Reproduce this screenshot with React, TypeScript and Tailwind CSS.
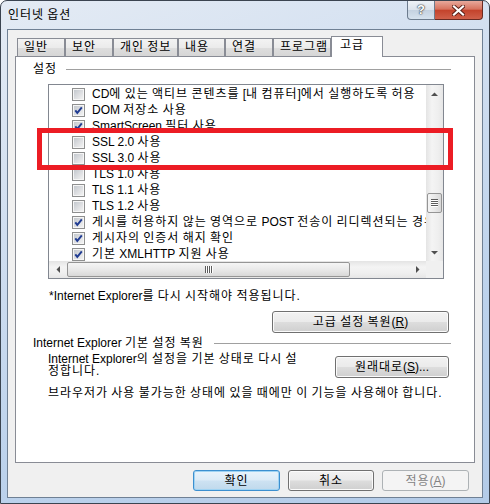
import React from "react";

type Item = { label: string; checked: boolean };

const items: Item[] = [
  { label: "CD에 있는 액티브 콘텐츠를 [내 컴퓨터]에서 실행하도록 허용", checked: false },
  { label: "DOM 저장소 사용", checked: true },
  { label: "SmartScreen 필터 사용", checked: true },
  { label: "SSL 2.0 사용", checked: false },
  { label: "SSL 3.0 사용", checked: false },
  { label: "TLS 1.0 사용", checked: false },
  { label: "TLS 1.1 사용", checked: false },
  { label: "TLS 1.2 사용", checked: false },
  { label: "게시를 허용하지 않는 영역으로 POST 전송이 리디렉션되는 경우 경고", checked: true },
  { label: "게시자의 인증서 해지 확인", checked: true },
  { label: "기본 XMLHTTP 지원 사용", checked: true },
];

const tabs = [
  { label: "일반", w: "w-[48px]" },
  { label: "보안", w: "w-[48px]" },
  { label: "개인 정보", w: "w-[65px]" },
  { label: "내용", w: "w-[47px]" },
  { label: "연결", w: "w-[48px]" },
  { label: "프로그램", w: "w-[58px]" },
];

// Gulim draws hangul on a full 12px cell; Noto's hangul are a bit narrower,
// so hangul runs get a little extra spacing.
const HANGUL = /([\u1100-\u11ff\u3130-\u318f\uac00-\ud7a3]+)/;
const K = ({ t }: { t: string }) => (
  <>
    {t.split(HANGUL).map((part, i) =>
      HANGUL.test(part) ? (
        <span key={i} className="tracking-[0.96px]">
          {part}
        </span>
      ) : (
        <React.Fragment key={i}>{part}</React.Fragment>
      )
    )}
  </>
);

const CheckBox = ({ checked }: { checked: boolean }) => (
  <svg width="13" height="13" viewBox="0 0 13 13" className="shrink-0">
    <defs>
      <linearGradient id="cbFill" x1="0" y1="0" x2="1" y2="1">
        <stop offset="0" stopColor="#c4c8ce" />
        <stop offset="1" stopColor="#f2f2f2" />
      </linearGradient>
    </defs>
    <rect x="0.5" y="0.5" width="12" height="12" fill="#f6f6f6" stroke="#8e8f8f" />
    <rect x="2" y="2" width="9" height="9" fill="url(#cbFill)" />
    {checked && (
      <path d="M3.3 6.3 L5.3 8.9 L9.8 3.3" fill="none" stroke="#203c92" strokeWidth="1.9" />
    )}
  </svg>
);

const Arrow = ({ dir }: { dir: "up" | "down" | "left" | "right" }) => {
  const d = {
    up: "M0 4 L3.5 0.5 L7 4 Z",
    down: "M0 0 L7 0 L3.5 3.5 Z",
    left: "M4 0 L4 7 L0.5 3.5 Z",
    right: "M0 0 L3.5 3.5 L0 7 Z",
  }[dir];
  const v = dir === "up" || dir === "down";
  return (
    <svg width={v ? 7 : 4} height={v ? 4 : 7} viewBox={v ? "0 0 7 4" : "0 0 4 7"}>
      <path d={d} fill="#4f4f4f" />
    </svg>
  );
};

const Button = ({
  children,
  className = "",
  kind = "normal",
}: {
  children: React.ReactNode;
  className?: string;
  kind?: "normal" | "default" | "disabled";
}) => {
  const look =
    kind === "default"
      ? "border-[#3c8fcf] bg-[linear-gradient(to_bottom,#e9f3fb_0%,#dcebf7_48%,#cde2f2_52%,#bfd9ec_100%)] shadow-[inset_0_0_0_1px_#9fd3f3] text-black"
      : kind === "disabled"
      ? "border-[#adb2b5] bg-[#f4f4f4] text-[#838383]"
      : "border-[#707070] bg-[linear-gradient(to_bottom,#f2f2f2_0%,#ebebeb_48%,#dddddd_52%,#cfcfcf_100%)] shadow-[inset_0_0_0_1px_#fbfbfb] text-black";
  return (
    <div
      className={`flex items-center justify-center whitespace-nowrap rounded-[3px] border text-[12px] leading-[14px] ${look} ${className}`}
    >
      <span>{children}</span>
    </div>
  );
};

export default function App() {
  return (
    <div className="relative w-[490px] h-[504px] overflow-hidden bg-white font-['Liberation_Sans','Noto_Sans_CJK_KR',sans-serif] text-black">
      {/* window frame */}
      <div className="flex h-[504px] w-[490px] flex-col rounded-t-[7px] border border-[#3b4450] bg-[linear-gradient(160deg,#e4ebf4_0%,#d0def0_35%,#bcd2ec_70%,#b3cbe8_100%)]">
        {/* title bar */}
        <div className="flex h-[28px] items-start justify-between">
          <div className="pl-[7px] pt-[7px] text-[12px] leading-[14px]">
            <K t="인터넷 옵션" />
          </div>
          <div className="mr-[6px] flex">
            <div className="flex h-[19px] w-[28px] items-center justify-center rounded-bl-[4px] border border-t-0 border-[#6c7b8d] bg-[linear-gradient(to_bottom,#eef2f7_0%,#dbe3ec_50%,#c4d1e0_51%,#d6e2ee_100%)]">
              <span className="text-[13px] font-bold leading-[14px] text-white [text-shadow:0_0_1px_#40464e,0_0_1px_#40464e,0_0_2px_#40464e]">?</span>
            </div>
            <div className="flex h-[19px] w-[48px] items-center justify-center rounded-br-[4px] border border-l-0 border-t-0 border-[#6a2a22] bg-[linear-gradient(to_bottom,#e8a99c_0%,#d7735f_45%,#c4432c_52%,#d0604a_100%)]">
              <svg width="13" height="11" viewBox="0 0 13 11">
                <path d="M2 1.5 L11 9.5 M11 1.5 L2 9.5" stroke="#5a1e16" strokeWidth="4" strokeLinecap="square" />
                <path d="M2 1.5 L11 9.5 M11 1.5 L2 9.5" stroke="#ffffff" strokeWidth="2.2" strokeLinecap="square" />
              </svg>
            </div>
          </div>
        </div>

        {/* client area */}
        <div className="mx-[6px] mb-[5px] flex h-[469px] flex-col border border-[#6f8094] bg-[#f0f0f0] px-[7px] pt-[6px]">
          {/* tabs */}
          <div className="relative z-10 flex h-[20px] items-end pl-[2px]">
            {tabs.map((t) => (
              <div
                key={t.label}
                className={`${t.w} h-[18px] border border-b-0 border-[#898c95] bg-[linear-gradient(to_bottom,#f3f3f3_0%,#ebebeb_50%,#dedede_51%,#d6d6d6_100%)] pl-[6px] text-[12px] leading-[16px] whitespace-nowrap`}
              >
                <K t={t.label} />
              </div>
            ))}
            <div className="-mb-px h-[21px] w-[52px] border border-b-0 border-[#898c95] bg-white pl-[8px] text-[12px] leading-[16px]">
              <K t="고급" />
            </div>
          </div>

          {/* tab panel */}
          <div className="flex h-[407px] flex-col border border-[#898c95] bg-white">
            <div className="mt-[5px] flex h-[14px] items-center gap-[9px] pl-[17px] pr-[23px]">
              <span className="text-[12px] leading-[14px]">
                <K t="설정" />
              </span>
              <div className="h-px flex-1 bg-[#a0a0a0]" />
            </div>

            {/* settings list */}
            <div className="ml-[32px] mt-[8px] flex h-[195px] w-[396px] flex-col border border-[#828790]">
              <div className="flex h-[176px]">
                <div className="w-[377px] overflow-hidden pt-px">
                  {items.map((it) => (
                    <div
                      key={it.label}
                      className="flex h-[16px] items-center gap-[7px] whitespace-nowrap pl-[23px] text-[12px] leading-[16px]"
                    >
                      <CheckBox checked={it.checked} />
                      <span>
                        <K t={it.label} />
                      </span>
                    </div>
                  ))}
                </div>
                {/* vertical scrollbar */}
                <div className="flex w-[17px] flex-col bg-[linear-gradient(to_right,#e4e4e4_0%,#f4f4f4_35%,#efefef_70%,#e6e6e6_100%)]">
                  <div className="flex h-[17px] items-center justify-center">
                    <Arrow dir="up" />
                  </div>
                  <div className="flex-1">
                    <div className="mx-auto mt-[91px] flex h-[20px] w-[15px] items-center justify-center rounded-[2px] border border-[#959595] bg-[linear-gradient(to_right,#f5f5f5_0%,#e9e9e9_50%,#d8d8d8_100%)]">
                      <svg width="7" height="8" viewBox="0 0 7 8">
                        <path d="M0 0.5 H7 M0 2.5 H7 M0 4.5 H7 M0 6.5 H7" stroke="#5c5c5c" strokeWidth="1" />
                        <path d="M0 1.5 H7 M0 3.5 H7 M0 5.5 H7 M0 7.5 H7" stroke="#ffffff" strokeWidth="1" />
                      </svg>
                    </div>
                  </div>
                  <div className="flex h-[17px] items-center justify-center">
                    <Arrow dir="down" />
                  </div>
                </div>
              </div>
              {/* horizontal scrollbar */}
              <div className="flex h-[17px]">
                <div className="flex w-[377px] bg-[linear-gradient(to_bottom,#e4e4e4_0%,#f4f4f4_35%,#efefef_70%,#e6e6e6_100%)]">
                  <div className="flex w-[17px] items-center justify-center">
                    <Arrow dir="left" />
                  </div>
                  <div className="flex flex-1 items-center">
                    <div className="ml-px flex h-[15px] w-[283px] items-center justify-center rounded-[2px] border border-[#959595] bg-[linear-gradient(to_bottom,#f5f5f5_0%,#e9e9e9_50%,#d8d8d8_100%)]">
                      <svg width="8" height="7" viewBox="0 0 8 7">
                        <path d="M0.5 0 V7 M2.5 0 V7 M4.5 0 V7 M6.5 0 V7" stroke="#5c5c5c" strokeWidth="1" />
                        <path d="M1.5 0 V7 M3.5 0 V7 M5.5 0 V7 M7.5 0 V7" stroke="#ffffff" strokeWidth="1" />
                      </svg>
                    </div>
                  </div>
                  <div className="flex w-[17px] items-center justify-center">
                    <Arrow dir="right" />
                  </div>
                </div>
                <div className="w-[17px] bg-[#f0f0f0]" />
              </div>
            </div>

            <div className="ml-[33px] mt-[10px] text-[12px] leading-[14px] whitespace-nowrap">
              <K t="*Internet Explorer를 다시 시작해야 적용됩니다." />
            </div>

            <Button className="ml-[256px] mt-[8px] h-[22px] w-[177px]">
              <K t="고급 설정 복원" />(<span className="underline">R</span>)
            </Button>

            <div className="mt-[3px] flex h-[14px] items-center gap-[10px] pl-[17px] pr-[23px]">
              <span className="text-[12px] leading-[14px] whitespace-nowrap">
                <K t="Internet Explorer 기본 설정 복원" />
              </span>
              <div className="h-px flex-1 bg-[#a0a0a0]" />
            </div>

            <div className="flex pl-[32px]">
              <div className="mt-[3px] w-[287px] text-[12px] leading-[12px] whitespace-nowrap">
                <K t="Internet Explorer의 설정을 기본 상태로 다시 설" />
                <br />
                <K t="정합니다." />
              </div>
              <Button className="mt-[6px] h-[22px] w-[114px]">
                <K t="원래대로" />(<span className="underline">S</span>)...
              </Button>
            </div>

            <div className="ml-[32px] mt-[8px] text-[12px] leading-[14px] whitespace-nowrap">
              <K t="브라우저가 사용 불가능한 상태에 있을 때에만 이 기능을 사용해야 합니다." />
            </div>
          </div>

          {/* dialog buttons */}
          <div className="mt-[7px] flex justify-end gap-[8px] pr-[6px]">
            <Button kind="default" className="h-[21px] w-[87px]">
              <K t="확인" />
            </Button>
            <Button className="h-[21px] w-[86px]">
              <K t="취소" />
            </Button>
            <Button kind="disabled" className="h-[21px] w-[87px]">
              <K t="적용" />(<span className="underline">A</span>)
            </Button>
          </div>
        </div>
      </div>

      {/* red highlight box */}
      <div className="absolute left-[37px] top-[128px] h-[42px] w-[416px] border-[5px] border-[#ec1c24]" />
    </div>
  );
}
